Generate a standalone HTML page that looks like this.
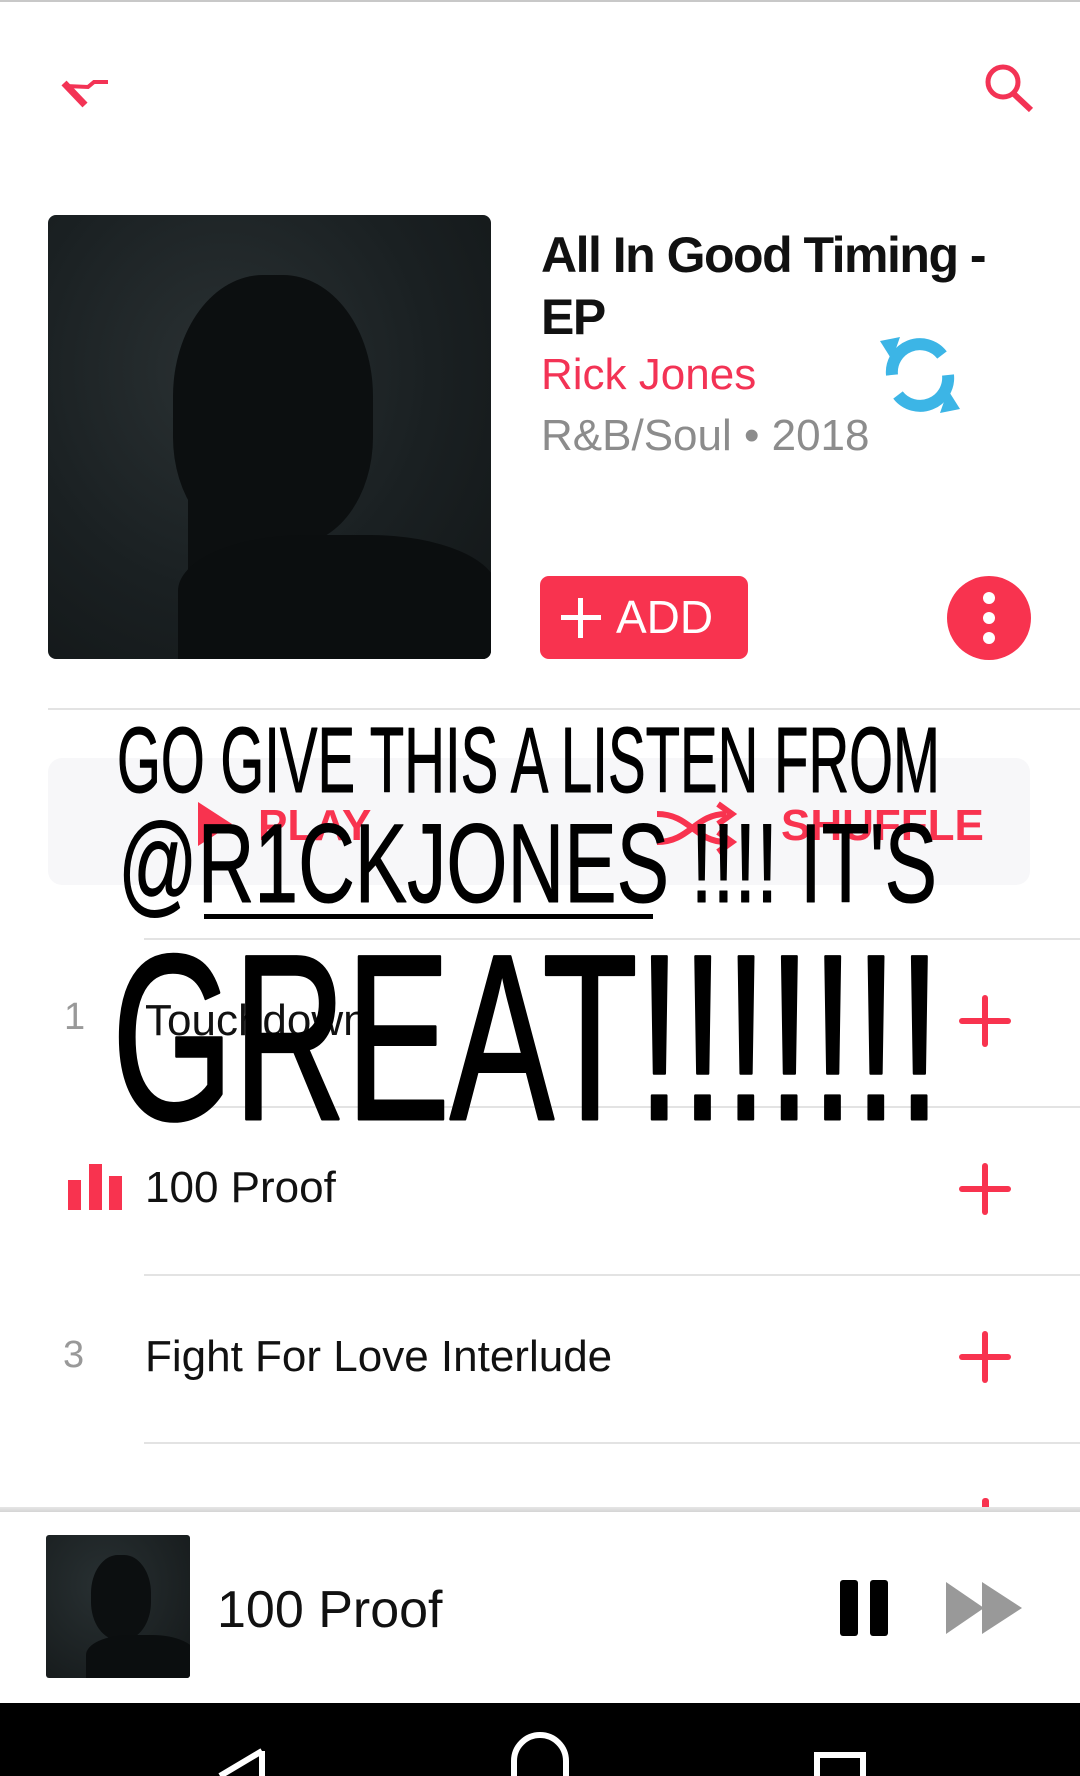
<!DOCTYPE html>
<html><head><meta charset="utf-8"><style>
*{margin:0;padding:0;box-sizing:border-box}
body{width:1080px;height:1776px;position:relative;background:#fff;font-family:"Liberation Sans",sans-serif;overflow:hidden}
.a{position:absolute}
.line{position:absolute;height:2px;background:#e3e3e3}
.t{position:absolute;font-size:44px;color:#111;white-space:nowrap}
.plus{position:absolute;width:52px;height:52px}
.plus:before,.plus:after{content:"";position:absolute;background:#f8334f;border-radius:3px}
.plus:before{left:23px;top:0;width:6px;height:52px}
.plus:after{left:0;top:23px;width:52px;height:6px}
</style></head><body>
<div class="a" style="left:0;top:0;width:1080px;height:2px;background:#c8c8c8"></div>
<svg class="a" style="left:0;top:0" width="1080" height="160">
<path d="M64 83 L85 105" stroke="#f33355" stroke-width="7" stroke-linecap="butt"/>
<path d="M66 86 L88 87 L94 82 L108 82" stroke="#f33355" stroke-width="4" fill="none"/>
<circle cx="1003" cy="82" r="15" stroke="#f33355" stroke-width="5" fill="none"/>
<path d="M1014 94 L1031 110" stroke="#f33355" stroke-width="6"/>
</svg>
<div class="a" style="left:48px;top:215px;width:443px;height:444px;border-radius:8px;background:radial-gradient(ellipse at 40% 35%,#2a3133 0%,#1a2022 55%,#121617 100%);overflow:hidden">
<div class="a" style="left:125px;top:60px;width:200px;height:270px;border-radius:45% 45% 40% 40%;background:#0c0f10"></div>
<div class="a" style="left:140px;top:260px;width:130px;height:120px;background:#0c0f10"></div>
<div class="a" style="left:130px;top:320px;width:320px;height:140px;border-radius:40% 40% 0 0;background:#0b0e0f"></div>
</div>
<div class="t" style="left:541px;top:224px;font-size:50px;line-height:62px;color:#111;white-space:normal;width:480px;font-weight:bold;letter-spacing:-1.5px">All In Good Timing -<br>EP</div>
<div class="t" style="left:541px;top:350px;font-size:44px;color:#f33355">Rick Jones</div>
<div class="t" style="left:541px;top:411px;font-size:44px;color:#8c8c8c">R&amp;B/Soul • 2018</div>
<svg class="a" style="left:870px;top:325px" width="100" height="100" viewBox="0 0 100 100">
<path d="M22 50 A28 28 0 0 1 72 30" stroke="#3cb5e6" stroke-width="12" fill="none"/>
<path d="M78 50 A28 28 0 0 1 28 70" stroke="#3cb5e6" stroke-width="12" fill="none"/>
<path d="M10 16 L30 12 L22 35 Z" fill="#3cb5e6"/>
<path d="M90 84 L70 88 L78 65 Z" fill="#3cb5e6"/>
</svg>
<div class="a" style="left:540px;top:576px;width:208px;height:83px;border-radius:9px;background:#f8334f;color:#fff;font-size:46px;line-height:83px;padding-left:76px">ADD</div>
<div class="a" style="left:561px;top:615px;width:40px;height:5px;background:#fff"></div>
<div class="a" style="left:578px;top:598px;width:5px;height:40px;background:#fff"></div>
<div class="a" style="left:947px;top:576px;width:84px;height:84px;border-radius:50%;background:#f8334f"></div>
<div class="a" style="left:983px;top:592px;width:12px;height:12px;border-radius:50%;background:#fff"></div>
<div class="a" style="left:983px;top:612px;width:12px;height:12px;border-radius:50%;background:#fff"></div>
<div class="a" style="left:983px;top:632px;width:12px;height:12px;border-radius:50%;background:#fff"></div>
<div class="line" style="left:48px;top:708px;width:1032px"></div>
<div class="a" style="left:48px;top:758px;width:982px;height:127px;border-radius:14px;background:#f7f7f9"></div>
<svg class="a" style="left:0;top:780px" width="1080" height="90">
<path d="M198 22 L232 44 L198 66 Z" fill="#f8334f"/>
<text x="258" y="60" font-family="Liberation Sans" font-weight="bold" font-size="44" fill="#f8334f">PLAY</text>
<path d="M657 34 C690 34 695 62 726 62 M657 62 C690 62 695 34 726 34" stroke="#f8334f" stroke-width="6" fill="none"/>
<path d="M718 24 L732 34 L718 44 M718 52 L732 62 L718 72" stroke="#f8334f" stroke-width="6" fill="none"/>
<text x="781" y="60" font-family="Liberation Sans" font-weight="bold" font-size="44" fill="#f8334f">SHUFFLE</text>
</svg>
<div class="line" style="left:144px;top:938px;width:936px"></div>
<div class="t" style="left:64px;top:996px;color:#999;font-size:38px">1</div>
<div class="t" style="left:145px;top:996px">Touchdown</div>
<div class="plus" style="left:959px;top:995px"></div>
<div class="line" style="left:144px;top:1106px;width:936px"></div>
<div class="a" style="left:68px;top:1180px;width:13px;height:30px;background:#f8334f"></div>
<div class="a" style="left:89px;top:1164px;width:13px;height:46px;background:#f8334f"></div>
<div class="a" style="left:109px;top:1176px;width:13px;height:34px;background:#f8334f"></div>
<div class="t" style="left:145px;top:1163px">100 Proof</div>
<div class="plus" style="left:959px;top:1163px"></div>
<div class="line" style="left:144px;top:1274px;width:936px"></div>
<div class="t" style="left:63px;top:1334px;color:#999;font-size:38px">3</div>
<div class="t" style="left:145px;top:1332px">Fight For Love Interlude</div>
<div class="plus" style="left:959px;top:1331px"></div>
<div class="line" style="left:144px;top:1442px;width:936px"></div>
<div class="a" style="left:982px;top:1498px;width:7px;height:12px;background:#f8334f;border-radius:3px"></div>
<div class="a" style="left:0;top:1507px;width:1080px;height:5px;background:linear-gradient(#e6e6e6,#d4d4d4)"></div>
<div class="a" style="left:0;top:1512px;width:1080px;height:191px;background:#fff"></div>
<div class="a" style="left:46px;top:1535px;width:144px;height:143px;border-radius:3px;background:radial-gradient(ellipse at 40% 35%,#283032,#141819);overflow:hidden">
<div class="a" style="left:45px;top:20px;width:60px;height:85px;border-radius:45%;background:#0c0f10"></div>
<div class="a" style="left:40px;top:100px;width:110px;height:50px;border-radius:40% 40% 0 0;background:#0b0e0f"></div>
</div>
<div class="t" style="left:217px;top:1580px;font-size:52px;color:#111">100 Proof</div>
<div class="a" style="left:840px;top:1580px;width:18px;height:56px;background:#000;border-radius:3px"></div>
<div class="a" style="left:870px;top:1580px;width:18px;height:56px;background:#000;border-radius:3px"></div>
<svg class="a" style="left:946px;top:1582px" width="76" height="52"><path d="M0 0 L38 26 L0 52 Z M36 0 L76 26 L36 52 Z" fill="#999"/></svg>
<div class="a" style="left:0;top:1703px;width:1080px;height:73px;background:#000"></div>
<svg class="a" style="left:0;top:1703px" width="1080" height="73">
<path d="M262 48 L262 73 M262 48 L220 73" stroke="#fff" stroke-width="6" fill="none"/>
<path d="M514 73 L514 58 A26 26 0 0 1 566 58 L566 73" stroke="#fff" stroke-width="6" fill="none"/>
<path d="M817 73 L817 52 L863 52 L863 73" stroke="#fff" stroke-width="6" fill="none"/>
</svg>
<svg class="a" style="left:0;top:0" width="1080" height="1200">
<g font-family="Liberation Sans Narrow, Liberation Sans, sans-serif" fill="#000" stroke="#000" stroke-linejoin="round">
<text x="117" y="792" font-size="93" stroke-width="1" textLength="823" lengthAdjust="spacingAndGlyphs">GO GIVE THIS A LISTEN FROM</text>
<text x="118" y="902" font-size="112" stroke-width="1" textLength="819" lengthAdjust="spacingAndGlyphs">@R1CKJONES !!!! IT'S</text>
<text x="112" y="1119" font-size="236" stroke-width="3" textLength="829" lengthAdjust="spacingAndGlyphs">GREAT!!!!!!!</text>
</g>
<rect x="204" y="914" width="449" height="5" fill="#000"/>
</svg>
</body></html>
